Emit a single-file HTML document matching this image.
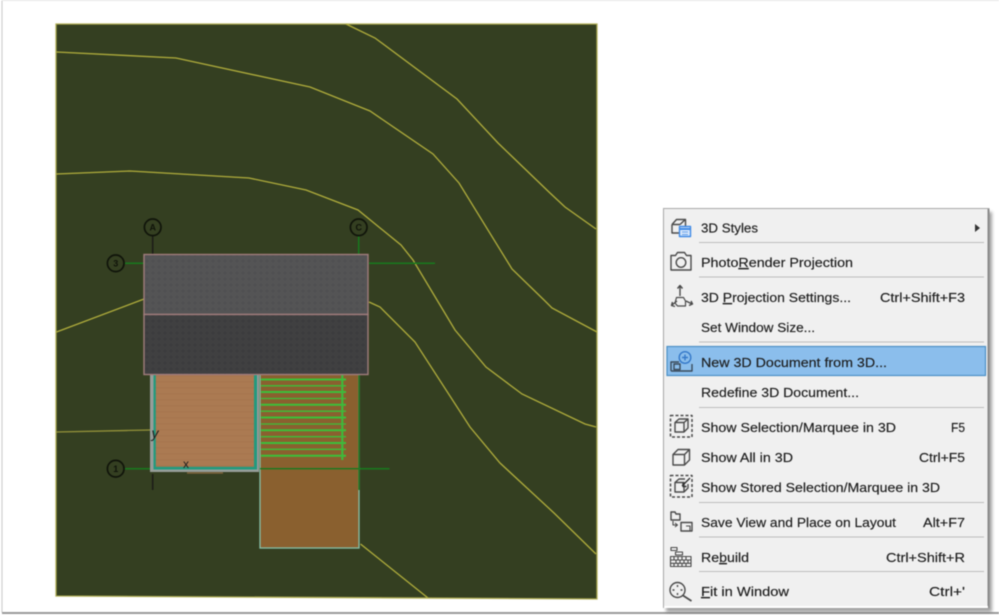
<!DOCTYPE html>
<html><head><meta charset="utf-8"><style>
html,body{margin:0;padding:0;background:#fff;width:999px;height:615px;overflow:hidden}
svg{display:block;filter:blur(.55px)}
text{font-family:"Liberation Sans",sans-serif;font-size:13px;fill:#1c1c1c;stroke:#1c1c1c;stroke-width:.15px}
.s{text-anchor:end}
</style></head><body>
<svg width="999" height="615" viewBox="0 0 999 615" xmlns="http://www.w3.org/2000/svg">
<defs>
<filter id="sh" x="-5%" y="-5%" width="110%" height="110%"><feGaussianBlur stdDeviation="1.5"/></filter>
<pattern id="fl" width="6" height="6" patternUnits="userSpaceOnUse"><rect width="6" height="6" fill="#ab7a52"/><rect y="3" width="6" height="1.500" fill="#a7764f"/></pattern>
<pattern id="dk" width="8" height="8" patternUnits="userSpaceOnUse"><rect width="8" height="8" fill="#8a602f"/><rect x="3" width="2" height="8" fill="#87 5d2d" opacity="0"/></pattern>
<pattern id="r1" width="6" height="6" patternUnits="userSpaceOnUse"><rect width="6" height="6" fill="#545455"/><circle cx="3" cy="3" r="1.500" fill="#505051"/></pattern>
<pattern id="r2" width="6" height="6" patternUnits="userSpaceOnUse"><rect width="6" height="6" fill="#404041"/><circle cx="3" cy="3" r="1.500" fill="#3c3c3d"/></pattern>
</defs>
<rect width="999" height="615" fill="#fff"/>
<!-- page frame -->
<rect x="1.500" y="0.500" width="1" height="612" fill="#c8c8c8"/>
<rect x="2" y="0" width="997" height="1" fill="#e6e6e6"/>
<rect x="2" y="612" width="997" height="2" fill="#9a9a9a"/>
<!-- site -->
<path d="M56 24H597V599L56 596Z" fill="#343f21" stroke="#b0ae55" stroke-width="1.300"/>
<g fill="none" stroke="#b0ad3c" stroke-width="1.300">
<path d="M346 24L375 38L457 99L498 143L550 193L565 207L596 229"/>
<path d="M56.500 52L176 58L310 87L370 111L433 154L459 183L512 269L544 300L552 308L597 332"/>
<path d="M56.500 174L130 171L249 178L306 190L358 210L401 245L413 260L437 300L455 330L486 367L522 394L585 424L596 427"/>
<path d="M369 302L380 307L415 342L470 427L500 463L554 513L596 554"/>
<path d="M56.500 332L144 299"/>
<path d="M56.500 432L150 430" stroke="#95933a"/>
<path d="M360.500 544L428 598"/>
</g>
<!-- grid lines -->
<g fill="none" stroke-width="1.500">
<path d="M152.700 236V254M152.700 474V490" stroke="#1c1c18"/>
<path d="M358.700 236V254M358.700 374V480M125 263.300H144M369 263.300H435M125 468.700H150M260 468.700H389.500" stroke="#187a1e"/>
<g stroke="#10140a" stroke-width="1.700">
<circle cx="152.700" cy="227.300" r="8.300"/>
<circle cx="358.700" cy="227.300" r="8.300"/>
<circle cx="115.700" cy="263.300" r="8.300"/>
<circle cx="115.700" cy="468.700" r="8.300"/>
</g>
</g>
<g text-anchor="middle" style="font-weight:bold">
<text x="152.700" y="230.500" style="font-size:9px;fill:#10140a;stroke:none">A</text>
<text x="358.700" y="230.500" style="font-size:9px;fill:#10140a;stroke:none">C</text>
<text x="115.700" y="266.500" style="font-size:9px;fill:#10140a;stroke:none">3</text>
<text x="115.700" y="472" style="font-size:9px;fill:#10140a;stroke:none">1</text>
</g>
<!-- deck -->
<rect x="260" y="374" width="99" height="174" fill="#8a602f" stroke="#86c0a8" stroke-width="1.300"/>
<path d="M359 374V490" stroke="#187a1e" stroke-width="1.300"/>
<path d="M260 468.700H359" stroke="#187a1e" stroke-width="1.300"/>
<!-- stairs -->
<g stroke="#3cc03a" fill="none">
<path stroke-width="2" d="M261 379.500H346M261 392H346M261 404.800H346M261 417.500H346M261 430.200H346M261 443H346M261 455.700H346"/>
<path stroke-width="1.300" d="M261 385.800H346M261 398.500H346M261 411.200H346M261 424H346M261 436.700H346M261 449.300H346"/>
<path stroke="#3fb83c" stroke-width="2.200" d="M342.300 375V460"/>
</g>
<!-- room -->
<rect x="150" y="374" width="109" height="98" fill="#979d99"/>
<rect x="153.500" y="374" width="103.500" height="95.500" fill="#229a7e"/>
<rect x="155.800" y="374" width="98.200" height="92.800" fill="url(#fl)"/>
<path d="M187 473H223" stroke="#8a6a40" stroke-width="1.200"/>
<text x="151.500" y="438" style="font-size:14px;fill:#1d1d1d;font-style:italic;stroke:none">y</text>
<text x="183" y="468" style="font-size:12px;fill:#1d1d1d;stroke:none">x</text>
<!-- roof -->
<rect x="144" y="254.500" width="224" height="60" fill="url(#r1)" stroke="#a07c7c" stroke-width="1.400"/>
<rect x="144" y="314.500" width="224" height="60" fill="url(#r2)" stroke="#a07c7c" stroke-width="1.400"/>
<!-- menu -->
<rect x="666" y="212" width="326" height="400" fill="#555" opacity=".55" filter="url(#sh)"/>
<rect x="663.500" y="208.500" width="325.500" height="399" fill="#f0f0f0" stroke="#a8a8a8" stroke-width="1"/>
<rect x="987.500" y="209" width="2" height="399" fill="#8a8a8a"/>
<rect x="664" y="606" width="324" height="2" fill="#fff"/>
<g stroke="#bcbcbc" stroke-width="1">
<path d="M699 242.500H984M699 277H984M699 342H984M699 407.500H984M699 502.500H984M699 537H984M699 571.500H984"/>
</g>
<rect x="667" y="346.500" width="318.500" height="29" fill="#8bbeec" stroke="#4b90c6" stroke-width="1.200"/>
<path d="M975 224L980 228L975 232Z" fill="#333"/>
<text x="701" y="232.500" textLength="57" lengthAdjust="spacingAndGlyphs">3D Styles</text>
<text x="701" y="267" textLength="152" lengthAdjust="spacingAndGlyphs">Photo<tspan text-decoration="underline">R</tspan>ender Projection</text>
<text x="701" y="302" textLength="150" lengthAdjust="spacingAndGlyphs">3D <tspan text-decoration="underline">P</tspan>rojection Settings...</text>
<text x="965" y="302" class="s" textLength="85" lengthAdjust="spacingAndGlyphs">Ctrl+Shift+F3</text>
<text x="701" y="332" textLength="114" lengthAdjust="spacingAndGlyphs">Set Window Size...</text>
<text x="701" y="367" textLength="186" lengthAdjust="spacingAndGlyphs">New 3D Document from 3D...</text>
<text x="701" y="397" textLength="158" lengthAdjust="spacingAndGlyphs">Redefine 3D Document...</text>
<text x="701" y="432" textLength="195" lengthAdjust="spacingAndGlyphs">Show Selection/Marquee in 3D</text>
<text x="965" y="432" class="s" textLength="14" lengthAdjust="spacingAndGlyphs">F5</text>
<text x="701" y="462" textLength="92" lengthAdjust="spacingAndGlyphs">Show All in 3D</text>
<text x="965" y="462" class="s" textLength="46" lengthAdjust="spacingAndGlyphs">Ctrl+F5</text>
<text x="701" y="492" textLength="239" lengthAdjust="spacingAndGlyphs">Show Stored Selection/Marquee in 3D</text>
<text x="701" y="527" textLength="195" lengthAdjust="spacingAndGlyphs">Save View and Place on Layout</text>
<text x="965" y="527" class="s" textLength="42" lengthAdjust="spacingAndGlyphs">Alt+F7</text>
<text x="701" y="562" textLength="48" lengthAdjust="spacingAndGlyphs">Re<tspan text-decoration="underline">b</tspan>uild</text>
<text x="965" y="562" class="s" textLength="79" lengthAdjust="spacingAndGlyphs">Ctrl+Shift+R</text>
<text x="701" y="596" textLength="88" lengthAdjust="spacingAndGlyphs"><tspan text-decoration="underline">F</tspan>it in Window</text>
<text x="965" y="596" class="s" textLength="36" lengthAdjust="spacingAndGlyphs">Ctrl+'</text>
<!-- icons -->
<g fill="none" stroke="#4a4a4a" stroke-width="1.400" stroke-linejoin="round">
<!-- 3D styles -->
<path d="M672 224.500L676.500 219.500H685.500V226M672 224.500H680M680 224.500L685 219.800M672 224.500V233H679"/>
<rect x="679.500" y="226.500" width="11" height="10" fill="#dbe9fb" stroke="#3f8ae6"/>
<path d="M679.500 229H690.500" stroke="#3f8ae6" stroke-width="2"/>
<path d="M682 232H688M682 234.500H688" stroke="#3f8ae6" stroke-width=".8"/>
<!-- camera -->
<path d="M671 255.500H675.500L677.500 252.500H684.500L686.500 255.500H691V270H671Z"/>
<circle cx="681" cy="262.500" r="4.800"/>
<!-- projection -->
<path d="M680 286V296M677.500 288.500L680 285.500L682.500 288.500M672 305L677 301M675 306.500L671.500 305.500L672.500 302M686 301L692 304M689 305.500L692.500 304L691 301"/>
<path d="M676.500 297.500H683.500L685.500 301V306H677.500L675 303Z" stroke-width="1.200"/>
<!-- new doc -->
<circle cx="685" cy="357.500" r="5.800" stroke="#3579c9"/>
<path d="M685 354.500V360.500M682 357.500H688" stroke="#3579c9"/>
<path d="M671 371V362H679M692 364V371H671" stroke="#3a4a5a"/>
<rect x="674" y="364" width="6" height="5.500" stroke="#3a4a5a"/>
<!-- selection -->
<rect x="670.500" y="415.500" width="21.500" height="21.500" stroke-dasharray="3 2" stroke-width="1.500"/>
<path d="M675 422.500L679 419H688V428L684 432H675ZM675 422.500H684V432M684 422.500L688 419"/>
<!-- show all -->
<path d="M673 454.500L678 449.500H689.500V460L684.500 465H673ZM673 454.500H684.500V465M684.500 454.500L689.500 449.500"/>
<!-- stored -->
<rect x="670.500" y="475.500" width="21.500" height="21.500" stroke-dasharray="3 2" stroke-width="1.500"/>
<path d="M675 482.500L679 479H685M675 482.500H684V492H675ZM684 492L688 488V484"/>
<path d="M682 486L690 478M683 483V486.500H686.500" stroke="#333"/>
<!-- save view -->
<path d="M671 512H675L676 514H680V520H671Z"/>
<path d="M673 521V525H677M675 523L677.500 525L675 527" stroke-width="1.100"/>
<path d="M681 522.500H692V531H681Z"/>
<path d="M686 526H690V531" stroke-width="1.100"/>
<!-- rebuild -->
<rect x="671" y="547.500" width="6" height="3" stroke-width="1.100"/>
<rect x="675.500" y="552" width="7" height="3" stroke-width="1.100"/>
<path d="M670.500 556.500H691V566.500H670.500ZM670.500 560H691M670.500 563.300H691M674 556.500V560M678 556.500V560M682 556.500V560M686 556.500V560M676 560V563.300M680 560V563.300M684 560V563.300M688 560V563.300M674 563.300V566.500M678 563.300V566.500M682 563.300V566.500M686 563.300V566.500" stroke-width="1.100"/>
<!-- fit -->
<circle cx="677.500" cy="590" r="7.500"/>
<path d="M683 595.500L691.500 601" stroke-width="1.700"/>
<path d="M677.500 585V587M677.500 593V595M672.500 590H674.500M680.500 590H682.500" stroke-width="1.400"/>
</g>
</svg>
</body></html>
